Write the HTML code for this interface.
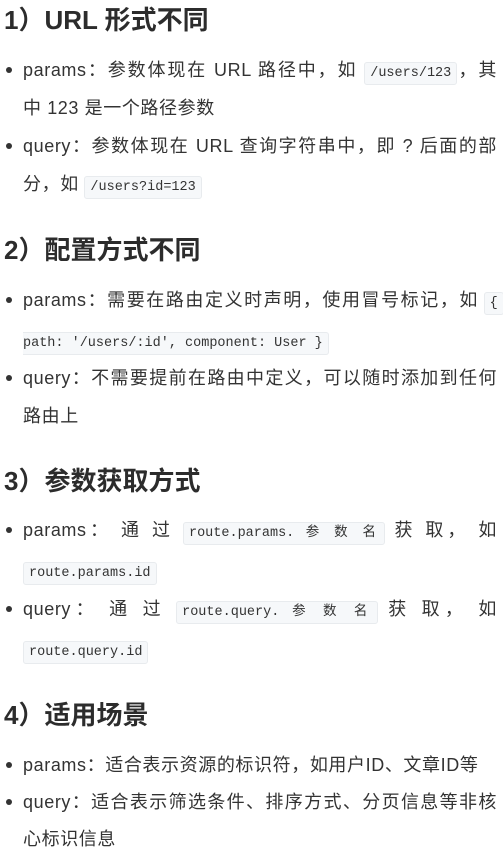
<!DOCTYPE html>
<html><head><meta charset="utf-8"><style>
body{margin:0;width:503px;height:865px;background:#fff;position:relative;overflow:hidden;font-family:"Liberation Sans","Noto Sans CJK SC",sans-serif;color:#333;}
.h{position:absolute;left:4px;font-size:26px;font-weight:bold;line-height:36px;color:#2c2c2c;white-space:nowrap;}
.l{position:absolute;left:23px;width:474px;font-size:18px;letter-spacing:0.6px;line-height:38px;white-space:nowrap;}
.j{text-align:justify;text-align-last:justify;white-space:normal;height:38px;overflow:hidden;}
.b{position:absolute;left:6px;width:6px;height:6px;border-radius:50%;background:#333;}
code{font-family:"Liberation Mono","Noto Sans CJK SC",monospace;font-size:13.5px;letter-spacing:0;background:#f6f8fa;border:1px solid #e8ebee;border-radius:3px;padding:3px 5px;color:#333;}
</style></head><body>
<div class="h" style="top:2px">1）URL 形式不同</div>
<div class="b" style="top:67px"></div>
<div class="l j" style="top:51px">params：参数体现在 URL 路径中，如 <code>/users/123</code>，其</div>
<div class="l" style="top:89px">中 123 是一个路径参数</div>
<div class="b" style="top:143px"></div>
<div class="l j" style="top:127px">query：参数体现在 URL 查询字符串中，即 ? 后面的部</div>
<div class="l" style="top:165px">分，如 <code>/users?id=123</code></div>

<div class="h" style="top:232px">2）配置方式不同</div>
<div class="b" style="top:297px"></div>
<div class="l" style="top:281px;width:480px;overflow:hidden"><span style="display:inline-block;width:455px;text-align:justify;text-align-last:justify;">params：需要在路由定义时声明，使用冒号标记，如</span> <code style="margin-left:0">{</code></div>
<div class="l" style="top:321px"><code style="border-left:none;border-radius:0 3px 3px 0;padding-left:0">path: '/users/:id', component: User }</code></div>
<div class="b" style="top:375px"></div>
<div class="l j" style="top:359px">query：不需要提前在路由中定义，可以随时添加到任何</div>
<div class="l" style="top:397px">路由上</div>

<div class="h" style="top:463px">3）参数获取方式</div>
<div class="b" style="top:527px"></div>
<div class="l j" style="top:511px">params： 通 过 <code>route.params. 参 数 名</code> 获 取， 如</div>
<div class="l" style="top:551px"><code>route.params.id</code></div>
<div class="b" style="top:606px"></div>
<div class="l j" style="top:590px">query： 通 过 <code>route.query. 参 数 名</code> 获 取， 如</div>
<div class="l" style="top:630px"><code>route.query.id</code></div>

<div class="h" style="top:697px">4）适用场景</div>
<div class="b" style="top:762px"></div>
<div class="l" style="top:746px">params：适合表示资源的标识符，如用户ID、文章ID等</div>
<div class="b" style="top:799px"></div>
<div class="l j" style="top:783px">query：适合表示筛选条件、排序方式、分页信息等非核</div>
<div class="l" style="top:820px">心标识信息</div>
</body></html>
